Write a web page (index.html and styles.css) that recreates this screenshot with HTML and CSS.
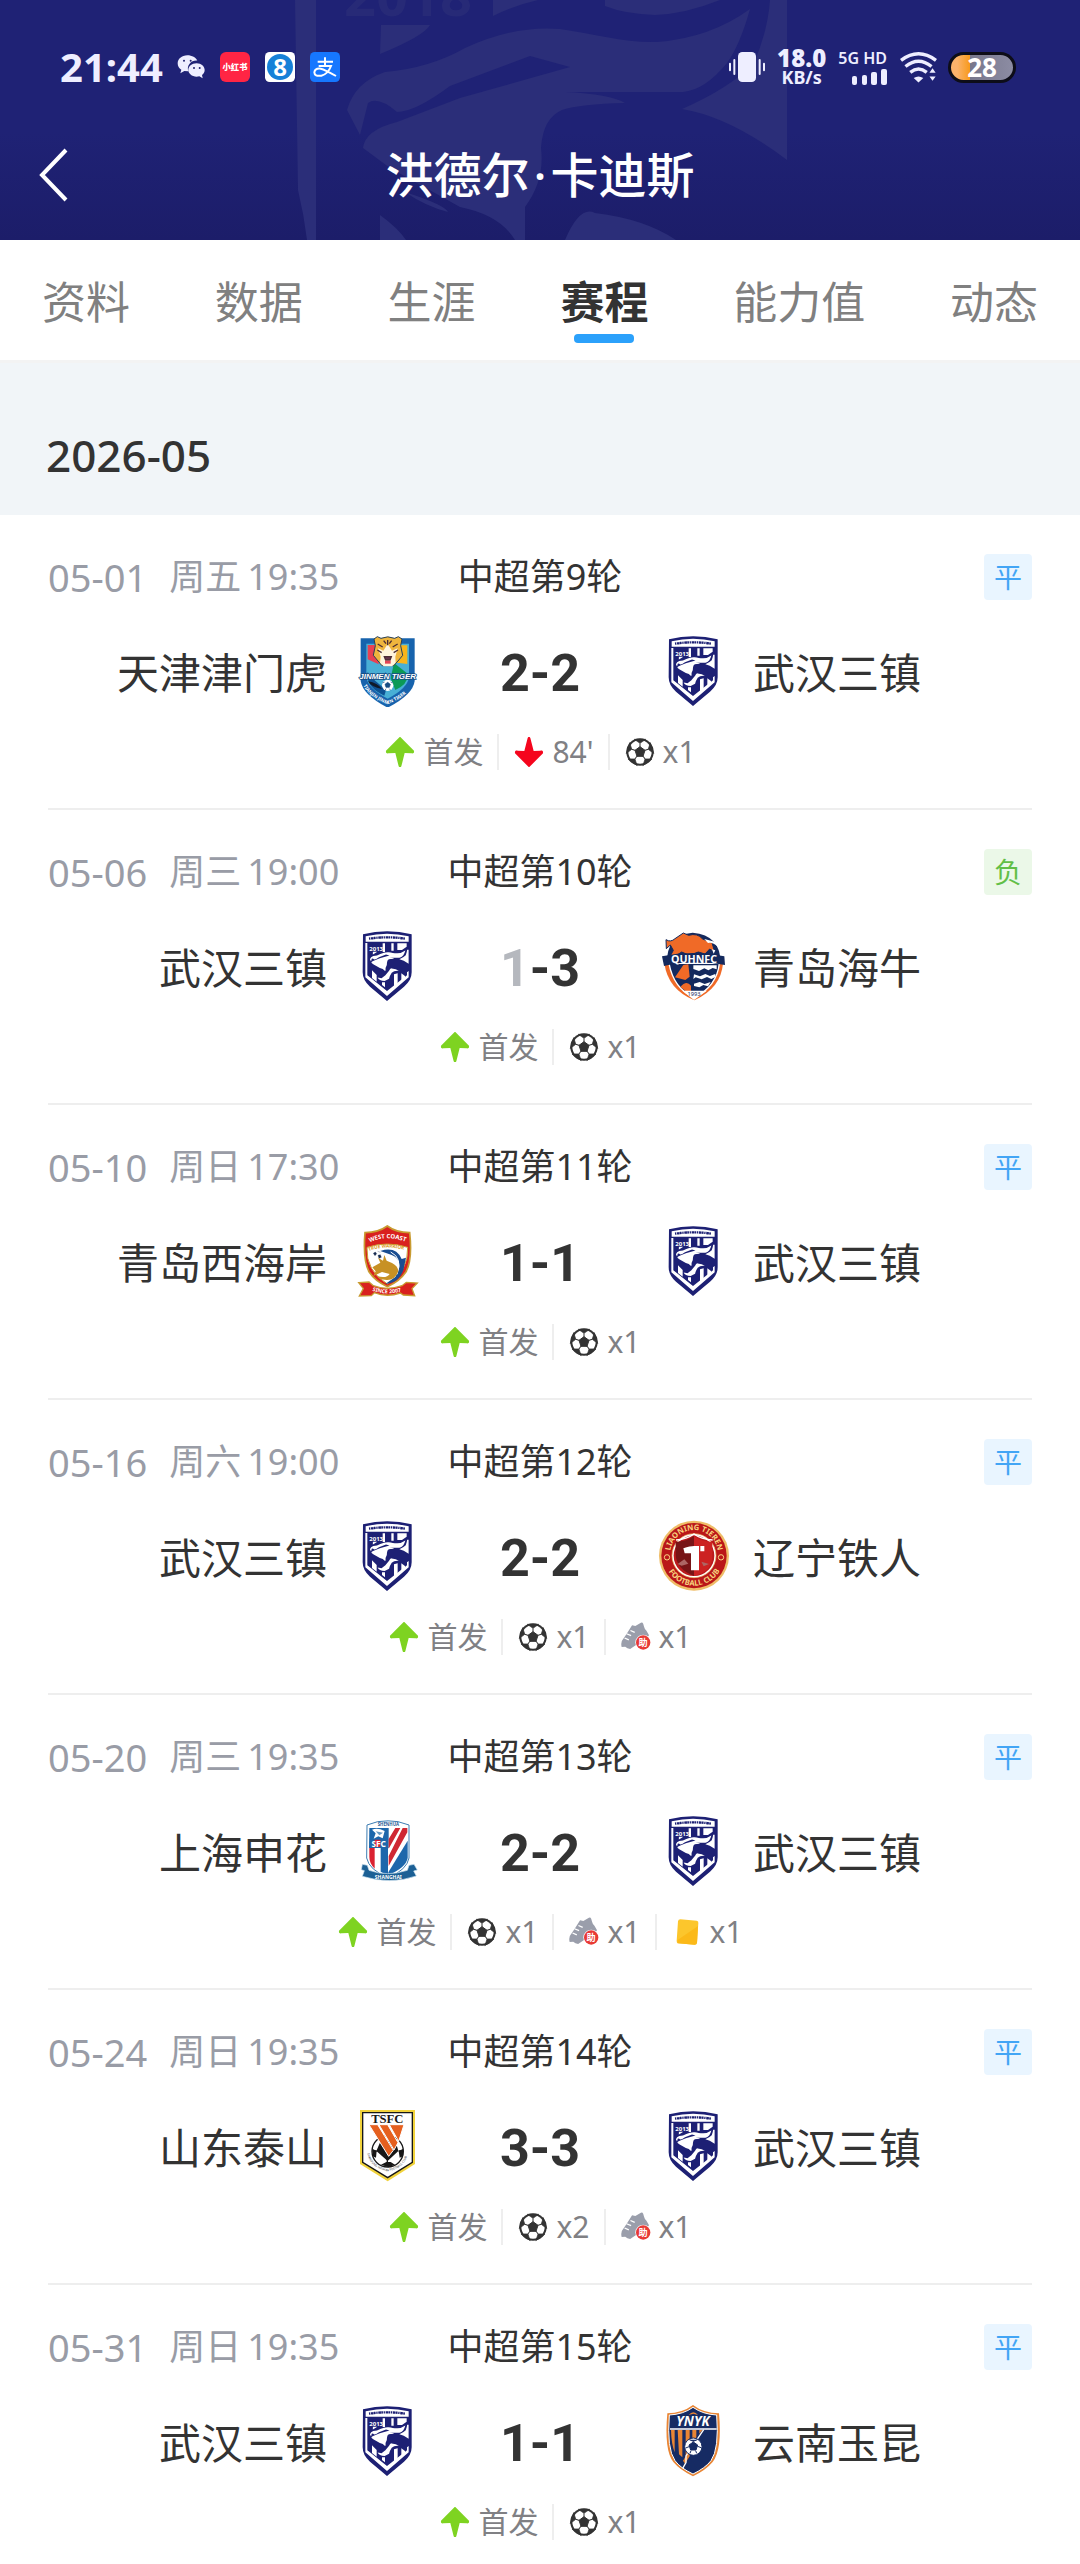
FILE: index.html
```html
<!DOCTYPE html>
<html lang="zh-CN">
<head>
<meta charset="utf-8">
<meta name="viewport" content="width=device-width, initial-scale=1">
<title>洪德尔·卡迪斯 - 赛程</title>
<link rel="stylesheet" href="styles.css">
</head>
<body>
<svg class="sprite" aria-hidden="true">
  <symbol id="up" viewBox="134 346 90 90"><path d="M179 345l42 42c1 7-2 9-8 8l-20-1-10 40q-4 8-8 0l-10-40-20 1c-6 1-9-1-8-8z" fill="#7ed321"/></symbol>
  <symbol id="down" viewBox="134 346 90 90"><path d="M179 437l42-42c1-7-2-9-8-8l-20 1-10-39q-4-8-8 0l-10 39-20-1c-6-1-9 1-8 8z" fill="#f5051d"/></symbol>
  <symbol id="ball" viewBox="-45 -45 90 90">
    <circle r="41" fill="#333"/><circle r="35" fill="#fff"/>
    <path d="M0-16L15-5 9 13H-9L-15-5z" fill="#333" stroke="#333" stroke-width="3" stroke-linejoin="round"/>
    <g id="patch"><path d="M-17-38L0-26 17-38z" fill="#333" stroke="#333" stroke-width="2"/><path d="M0-26V-14" stroke="#333" stroke-width="3"/></g>
    <use href="#patch" transform="rotate(72)"/><use href="#patch" transform="rotate(144)"/><use href="#patch" transform="rotate(216)"/><use href="#patch" transform="rotate(288)"/>
  </symbol>
  <symbol id="boot" viewBox="693 375 92 90">
    <path d="M727 384l10 2 17-10q5-2 7 3l3 10q2 8 7 12l8 14-10 12-31 18-17 12q-9-1-15-7l-11 1q-4-17 5-26l10-14z" fill="#9a9eab"/>
    <path d="M710 410l14 6M704 423l13 6M722 400l13 6" stroke="#fff" stroke-width="4"/>
    <circle cx="761" cy="437" r="24" fill="#fff"/><circle cx="761" cy="437" r="22" fill="#e83a35"/>
    <text x="761" y="447" font-size="28" font-weight="700" text-anchor="middle" fill="#fff">助</text>
  </symbol>
  <symbol id="card" viewBox="995 377 90 90"><path d="M1020 384l49 4q6 1 5 7l-4 59q-1 6-7 6l-49-4q-6-1-5-7l4-59q1-6 7-6z" fill="#fcc62c"/><path d="M1073 404l-61 42-1 10 52 4q6 0 7-6z" fill="#fbb919"/></symbol>

  <symbol id="wuhan" viewBox="949 45 216 216">
    <path d="M985 58Q1057 40 1131 58V172Q1131 196 1108 215L1057 258 1006 215Q984 196 984 172z" fill="#1d2074"/>
    <path d="M993 64Q1057 49 1122 64V80H993z" fill="#fff"/>
    <path d="M1003 71q54-8 109 0" fill="none" stroke="#1d2074" stroke-width="7" stroke-dasharray="4 2 8 1 5 2"/>
    <path d="M992 84H998V181L1057 228 1117 181V172L1122 168V187L1057 243 992 187z" fill="#fff"/>
    <path d="M1044 85h7v26h-7zM1070 85h7v22h-7zM1088 85h28v10l-14 10h-14z" fill="#fff"/>
    <text x="1004" y="107" font-size="18" font-weight="700" fill="#fff">2013</text>
    <g transform="translate(988 104) scale(.264)" fill="#fff">
      <path d="M101 25H150Q144 36 100 54z"/>
      <path id="jaguar" d="M67 110Q75 82 105 72 150 68 185 48 235 25 280 29C315 34 345 43 377 42Q430 38 470 9 460 45 447 63 425 90 403 92H285Q330 94 345 103 300 104 282 110 263 118 261 148 265 180 245 207V240H235Q220 215 180 207L110 168 83 148Q85 130 117 122L180 98 290 67 250 56 170 86Q135 112 117 112 98 96 88 103L80 135z"/>
      <path d="M402 109Q450 88 474 63 488 30 490 0H507V160Q450 117 402 109zM285 240Q300 205 315 213 365 219 396 240 340 236 315 262 290 300 285 330l-50 26q-64-2-80-40l44 8 44-34z"/>
    </g>
    <path d="M1012 166l14 14v20l-14-11zM1042 202h9v15l-9-7zM1078 178l11-3v34l-11 9zM1100 175l11 8v10l-11 9z" fill="#fff"/>
  </symbol>

  <symbol id="tianjin" viewBox="30 42 216 216">
    <path d="M59 52H221V180Q216 221 140 260 65 221 59 180z" fill="#1763ad"/>
    <path d="M76 68H204V168Q200 202 140 233 80 202 76 168z" fill="#48afd5"/>
    <path d="M80 72h28l5 58-33-15z" fill="#e84152"/><path d="M170 73h29v56l-31-4z" fill="#f8b51b"/><path d="M159 126l43 34q-3 32-39 47l-14-35z" fill="#0b9a56"/><path d="M80 160l55 47-5 17q-48-22-50-55z" fill="#0e5293"/>
    <path d="M81 181q29 5 42 23-33-6-42-23z" fill="#101a28"/>
    <path d="M99 54l10-7 11 5q20-9 41 0l11-5 11 7-4 20 6 29-14 17-13 14h-35l-12-14-14-17 6-29z" fill="#efb53d" stroke="#26405a" stroke-width="3"/>
    <path d="M111 82l16 7 13-20 13 20 17-7-7 25 1 18-11 11h-25l-11-11 2-18z" fill="#fff4dc"/>
    <path d="M110 69l15 9M170 69l-15 9M140 57v16M128 59l7 9M152 59l-7 9M109 87l13 8M171 87l-13 8M130 107h21l-4 10h-13z" fill="#65334b" stroke="#4b2d34" stroke-width="4"/>
    <path d="M132 119h17v9h-17z" fill="#e34555"/>
    <text x="140" y="174" text-anchor="middle" class="narrow" fill="#fff" stroke="#174d83" stroke-width="5" paint-order="stroke">JINMEN TIGER</text>
    <circle cx="140" cy="193" r="17" fill="#fff"/><path d="M140 184l8 6-3 9h-10l-3-9zM124 186l7-3M156 186l-7-3M132 208l3-5M149 208l-4-5" fill="#174d83" stroke="#174d83" stroke-width="2"/>
    <path id="tj-arc" d="M65 186Q76 224 140 250 204 224 216 186" fill="none"/><text font-size="14" font-weight="700" fill="#fff"><textPath href="#tj-arc" startOffset="8">TIANJIN JINMEN TIGER</textPath></text>
  </symbol>

  <symbol id="hainiu" viewBox="48 60 216 216">
    <path d="M78 160Q75 76 155 68 239 75 239 160z" fill="#14295d"/>
    <path d="M70 160H246Q240 235 160 271 81 239 70 160z" fill="#f06a27"/>
    <path d="M84 160H235Q228 228 160 263 98 236 84 160z" fill="#14295d" stroke="#fff" stroke-width="4"/>
    <path d="M75 89q14 9 27-3l25-17 16 7q26-8 42 11l28 11 8 28-15-9-14 15-20-6-27 10-23-10-23 15-10-5 8-15-9-16-12 11z" fill="#f06a27" stroke="#14295d" stroke-width="3"/>
    <path d="M190 87l31 8q13 5 10 16-16-15-30-12zM213 118l10 3-5 10z" fill="#fff"/>
    <path d="M102 202l25-37 15-2 4 37-13 10zM118 231q18-22 32-4v17l-12 3z" fill="#f06a27"/>
    <path d="M157 166h70v12l-12-4-13 7-12-6-16 8-17-6zM159 193l18 6 16-7 14 6 16-6v9l-12 6-13-6-16 7-18-6-7 5zM159 221l17-5 15 6 18-6-8 13-14-4-12 7-16-4z" fill="#fff"/>
    <path d="M63 139Q155 119 250 139L252 165Q158 145 69 168z" fill="#14295d"/>
    <text x="159" y="160" text-anchor="middle" font-size="32" font-weight="700" fill="#fff">QUHNFC</text>
    <path d="M124 242h74l-39 28z" fill="#fff"/><text x="159" y="257" text-anchor="middle" font-size="17" fill="#14295d">1993</text>
  </symbol>

  <symbol id="westcoast" viewBox="30 45 216 216">
    <path d="M139 48q25 19 67 20 9 84-12 119-18 27-55 43-36-16-54-43-20-35-13-119 41-1 67-20z" fill="#d9211e" stroke="#c89b31" stroke-width="5"/>
    <path d="M78 112q61-20 122 0 3 72-61 110-65-40-61-110z" fill="#fff" stroke="#c89b31" stroke-width="3"/>
    <path id="wc-a" d="M86 97q53-24 112 0" fill="none"/><text font-size="18" font-weight="700" fill="#fff"><textPath href="#wc-a">WEST COAST</textPath></text>
    <path id="wc-b" d="M84 123q54-21 118 0" fill="none"/><text font-size="14" font-weight="700" fill="#d99a24"><textPath href="#wc-b">TRUE WARRIOR</textPath></text>
    <circle cx="108" cy="135" r="15" fill="#fff"/><path d="M97 130l6-4 4 5-5 6zM111 136l7-2 3 8-7 3zM110 124l8 3" fill="#172b50" stroke="#172b50"/>
    <path d="M118 123q47-15 64 24l13-4-8 38q-15 39-54 41l30-21q29-49-11-66z" fill="#194d91"/>
    <path d="M149 126q37 18 19 67" fill="none" stroke="#fff" stroke-width="3"/>
    <path d="M94 172l24-14-7-15 15 9 4-17 7 17 16 7q18 9 19 25-10 27-35 26-26-1-28-11 29 7 37-7l-23-6-26 12 7-14z" fill="#c79124"/>
    <path d="M53 218l31-2 13 11q41 16 86 0l13-10 33 2-16 17 8 21-34-2-9-6q-40 14-78-1l-9 9-36 1 12-22z" fill="#d9211e" stroke="#c89b31" stroke-width="4"/>
    <path id="wc-c" d="M94 242q46 16 94 0" fill="none"/><text font-size="16" font-weight="700" fill="#fff"><textPath href="#wc-c">SINCE 2007</textPath></text>
  </symbol>

  <symbol id="liaoning" viewBox="48 60 216 216">
    <circle cx="159" cy="167" r="105" fill="#efbd68"/><circle cx="159" cy="167" r="98" fill="#ba1719"/><circle cx="159" cy="167" r="66" fill="#fff" stroke="#efbd68" stroke-width="2"/><circle cx="159" cy="167" r="61" fill="#b91a1c"/>
    <path d="M104 126q34-2 55-18v120q-53-20-55-65z" fill="#781416"/><path d="M159 108q20 16 55 18v45q-2 45-55 57z" fill="#cc2222"/>
    <path d="M105 120q33-2 54-18 21 16 56 18" fill="none" stroke="#fff" stroke-width="4"/>
    <path d="M127 145q21-7 32-7h15v73h-24v-51h-19zM178 138h12v16h-12z" fill="#fff"/><path d="M110 192l20-14 12 13-20 6zM181 185l23 7-16 7z" fill="#ad6664"/>
    <path id="ln-t" d="M87 162a72 72 0 0 1 144 0" fill="none"/><text font-size="23" font-weight="700" fill="#f7d37f"><textPath href="#ln-t" startOffset="10">LIAONING TIEREN</textPath></text>
    <path id="ln-b" d="M69 167a90 90 0 0 0 180 0" fill="none"/><text font-size="23" font-weight="700" fill="#f7d37f"><textPath href="#ln-b" startOffset="50">FOOTBALL CLUB</textPath></text>
    <circle cx="78" cy="172" r="8" fill="none" stroke="#f7d37f" stroke-width="3"/><circle cx="240" cy="172" r="8" fill="none" stroke="#f7d37f" stroke-width="3"/>
  </symbol>

  <symbol id="shenhua" viewBox="30 75 216 216">
    <path d="M78 105l32-10q32-5 61 0l33 10v99q-6 35-62 59-58-23-65-59z" fill="#fff" stroke="#3c7db3" stroke-width="3"/>
    <path d="M85 114h58v60H84z" fill="#1d67ab"/><path d="M85 174h16v62q-16-16-16-35zM101 149h17v22h-17z" fill="#da2131"/><path d="M119 174h22v83l-22-12z" fill="#1d67ab"/>
    <path d="M163 114h15l-35 62v-29zM185 114h14v13l-56 101v-30z" fill="#cf2833"/><path d="M200 152v52q-5 29-58 51v-8z" fill="#1d67ab"/>
    <path d="M93 119q17-7 38 4l-6 22-13-6-14 7 6-16z" fill="#fff"/><path d="M104 124l22 4-11 8z" fill="#679bc5"/>
    <text x="113" y="171" text-anchor="middle" font-size="25" font-weight="700" fill="#fff">SFC</text><text x="142" y="108" text-anchor="middle" font-size="13" font-weight="700" fill="#1d5a92">SHENHUA</text>
    <path d="M64 223l15 3 5 15q55 20 115 0l5-15 15-3 10 17-11 3 8 15q-78 27-162 1l6-17-9-3z" fill="#1c6095" stroke="#cde4f2" stroke-width="2"/>
    <text x="142" y="266" text-anchor="middle" font-size="15" font-weight="700" fill="#fff">SHANGHAI</text>
  </symbol>

  <symbol id="taishan" viewBox="30 60 216 216">
    <path d="M57 60H222V222L140 274 57 222z" fill="#f1d33c"/><path d="M65 68H214V217L140 263 65 217z" fill="#fff" stroke="#171717" stroke-width="4"/>
    <circle cx="140" cy="184" r="47" fill="#fff" stroke="#171717" stroke-width="4"/>
    <path d="M120 151h43l9 32-32 30-34-30zM94 176l13 7-2 20-10-4zM187 176l-14 7 3 20 10-4zM120 224l16-8h13l13 8-19 8z" fill="#171717"/><path d="M107 183h-12M173 183h12M139 205v17" stroke="#171717" stroke-width="4"/>
    <path d="M84 104h26l47 77-14 18zM114 104h26l31 54-12 22zM145 104h44l-16 50z" fill="#e5601f" stroke="#fff" stroke-width="3"/>
    <text x="139" y="98" text-anchor="middle" font-size="38" font-weight="700" class="serif" fill="#171717">TSFC</text>
    <path id="ts-a" d="M79 190q8 43 61 54 52-10 61-54" fill="none"/><text font-size="9" fill="#333"><textPath href="#ts-a">SHANDONG TAISHAN FOOTBALL CLUB</textPath></text>
  </symbol>

  <symbol id="yunnan" viewBox="48 75 216 216">
    <path d="M156 75q31 24 78 25 10 110-19 146-20 24-59 43-40-20-59-43-28-35-18-146 45-1 77-25z" fill="#e98534"/><path d="M156 82q30 21 71 23 8 102-17 137-17 22-54 40-38-18-54-40-25-35-17-137 42-2 71-23z" fill="#162b63" stroke="#fff" stroke-width="3"/>
    <path d="M90 150h11v67q-10-25-11-67zM110 150h14v82l-10-9zM134 150h12v79l-14 22-6-9 8-13zM154 150h12v22l-12 16zM175 150h9l-9 11z" fill="#e98534"/>
    <path d="M87 147h140" stroke="#fff" stroke-width="4"/><path d="M188 149l-53 79v20l-10 17" fill="none" stroke="#fff" stroke-width="4"/>
    <path d="M143 105q14-16 28 0l-14-4z" fill="#e98534"/><text x="156" y="139" text-anchor="middle" font-size="40" font-weight="700" font-style="italic" fill="#fff">YNYK</text>
    <circle cx="157" cy="200" r="26" fill="#fff" stroke="#162b63" stroke-width="3"/><path d="M157 186l13 9-5 15h-16l-5-15zM145 179l12 5 12-5M134 204l10-4M180 203l-10-4M147 220l3-8M167 220l-3-8" fill="#162b63" stroke="#162b63" stroke-width="3"/>
  </symbol>
</svg>

<header class="header">
  <svg class="watermark" viewBox="0 0 520 240" aria-hidden="true">
    <g fill="#2b2e79">
      <path d="M15 0H36V240H27Q24 215 18 190z"/>
      <text x="64" y="16" font-size="56" font-weight="700" opacity=".7">2018</text>
      <path d="M101 25H150Q144 36 100 54zM213 0H258Q232 6 213 16zM325 0H440Q405 14 375 15 345 14 325 6z"/>
      <use href="#jaguar"/>
      <path d="M402 109Q450 88 474 63 488 30 490 0H507V160Q450 117 402 109zM125 192Q165 205 168 212 145 206 125 192zM100 215Q118 228 126 240H100zM285 240Q300 205 315 213 365 219 396 240z"/>
    </g>
  </svg>
  <div class="status">
    <span class="clock">21:44</span>
    <svg class="app" viewBox="0 0 90 90" role="img" aria-label="微信"><path d="M37 10c-17 0-29 11-29 24 0 8 4 15 11 19l-3 11 12-7 12 1c-6-19 10-34 27-32C63 17 51 10 37 10zm28 24C50 34 40 44 40 54s10 20 25 20l8-1 10 6-2-10c5-4 8-9 8-15 0-10-10-20-24-20z" fill="#eef"/><g fill="#20226f"><circle cx="27" cy="26" r="3"/><circle cx="47" cy="26" r="3"/><circle cx="57" cy="48" r="3"/><circle cx="74" cy="48" r="3"/></g></svg>
    <svg class="app" viewBox="0 0 90 90" role="img" aria-label="小红书"><rect width="90" height="90" rx="18" fill="#ff2544"/><text x="45" y="54" text-anchor="middle" font-size="25" font-weight="900" fill="#fff">小红书</text></svg>
    <svg class="app" viewBox="0 0 90 90"><rect width="90" height="90" rx="14" fill="#fff"/><circle cx="45" cy="45" r="39" fill="#1681d8"/><text x="45" y="71" text-anchor="middle" font-size="72" font-weight="700" fill="#fff">8</text></svg>
    <svg class="app" viewBox="0 0 90 90" role="img" aria-label="支付宝"><rect width="90" height="90" rx="14" fill="#1677ff"/><path d="M23 29h46M45 16v26M26 42h37Q54 66 34 71 13 74 13 61q2-13 19-11 13 3 46 22" fill="none" stroke="#fff" stroke-width="6"/></svg>
    <span class="spacer"></span>
    <svg class="vibrate" viewBox="0 0 108 90"><rect x="27" width="54" height="90" rx="13" fill="#eef"/><path d="M3 35v20M16 24v42M92 24v42M105 35v20" stroke="#eef" stroke-width="6" stroke-linecap="round"/></svg>
    <span class="speed"><b>18.0</b><small>KB/s</small></span>
    <span class="signal"><small>5G HD</small><svg viewBox="0 0 36 16"><g fill="#eef"><rect x="1" y="7" width="5" height="9" rx="2"/><rect x="11" y="6" width="5" height="10" rx="2"/><rect x="20" y="3" width="6" height="13" rx="2"/><rect x="30" width="6" height="16" rx="2"/></g></svg></span>
    <svg class="wifi" viewBox="0 0 108 90"><path d="M3 24Q54-14 105 24M16 42Q54 12 92 42M30 59Q54 40 78 59" fill="none" stroke="#eef" stroke-width="10"/><path d="M40 76q14-9 28 0L54 89zM86 60l9-13 9 13zM86 71l9 13 9-13z" fill="#eef"/></svg>
    <span class="battery">28</span>
  </div>
  <div class="titlebar">
    <button class="back" type="button" aria-label="返回"><svg viewBox="0 0 30 54"><path d="M27 2L3 27 27 52" fill="none" stroke="#fff" stroke-width="4"/></svg></button>
    <h1>洪德尔<span class="dot">·</span>卡迪斯</h1>
  </div>
</header>

<nav class="tabs">
  <a href="#info">资料</a><a href="#stats">数据</a><a href="#career">生涯</a><a href="#schedule" class="active" aria-current="page">赛程</a><a href="#ability">能力值</a><a href="#feed">动态</a>
</nav>

<main id="schedule">
  <h2 class="month">2026-05</h2>
  <ul class="matches">
    <li class="match">
      <div class="meta"><p class="date"><span>05-01</span><span>周五</span><span>19:35</span></p><h3>中超第9轮</h3><span class="tag">平</span></div>
      <div class="teams"><div class="team home">天津津门虎<svg><use href="#tianjin"/></svg></div><p class="score"><span>2</span>-<span>2</span></p><div class="team"><svg><use href="#wuhan"/></svg>武汉三镇</div></div>
      <ul class="events"><li><svg><use href="#up"/></svg>首发</li><li><svg><use href="#down"/></svg>84'</li><li><svg><use href="#ball"/></svg>x1</li></ul>
    </li>
    <li class="match">
      <div class="meta"><p class="date"><span>05-06</span><span>周三</span><span>19:00</span></p><h3>中超第10轮</h3><span class="tag loss">负</span></div>
      <div class="teams"><div class="team home">武汉三镇<svg><use href="#wuhan"/></svg></div><p class="score"><span class="lost">1</span>-<span>3</span></p><div class="team"><svg><use href="#hainiu"/></svg>青岛海牛</div></div>
      <ul class="events"><li><svg><use href="#up"/></svg>首发</li><li><svg><use href="#ball"/></svg>x1</li></ul>
    </li>
    <li class="match">
      <div class="meta"><p class="date"><span>05-10</span><span>周日</span><span>17:30</span></p><h3>中超第11轮</h3><span class="tag">平</span></div>
      <div class="teams"><div class="team home">青岛西海岸<svg><use href="#westcoast"/></svg></div><p class="score"><span>1</span>-<span>1</span></p><div class="team"><svg><use href="#wuhan"/></svg>武汉三镇</div></div>
      <ul class="events"><li><svg><use href="#up"/></svg>首发</li><li><svg><use href="#ball"/></svg>x1</li></ul>
    </li>
    <li class="match">
      <div class="meta"><p class="date"><span>05-16</span><span>周六</span><span>19:00</span></p><h3>中超第12轮</h3><span class="tag">平</span></div>
      <div class="teams"><div class="team home">武汉三镇<svg><use href="#wuhan"/></svg></div><p class="score"><span>2</span>-<span>2</span></p><div class="team"><svg><use href="#liaoning"/></svg>辽宁铁人</div></div>
      <ul class="events"><li><svg><use href="#up"/></svg>首发</li><li><svg><use href="#ball"/></svg>x1</li><li><svg><use href="#boot"/></svg>x1</li></ul>
    </li>
    <li class="match">
      <div class="meta"><p class="date"><span>05-20</span><span>周三</span><span>19:35</span></p><h3>中超第13轮</h3><span class="tag">平</span></div>
      <div class="teams"><div class="team home">上海申花<svg><use href="#shenhua"/></svg></div><p class="score"><span>2</span>-<span>2</span></p><div class="team"><svg><use href="#wuhan"/></svg>武汉三镇</div></div>
      <ul class="events"><li><svg><use href="#up"/></svg>首发</li><li><svg><use href="#ball"/></svg>x1</li><li><svg><use href="#boot"/></svg>x1</li><li><svg><use href="#card"/></svg>x1</li></ul>
    </li>
    <li class="match">
      <div class="meta"><p class="date"><span>05-24</span><span>周日</span><span>19:35</span></p><h3>中超第14轮</h3><span class="tag">平</span></div>
      <div class="teams"><div class="team home">山东泰山<svg><use href="#taishan"/></svg></div><p class="score"><span>3</span>-<span>3</span></p><div class="team"><svg><use href="#wuhan"/></svg>武汉三镇</div></div>
      <ul class="events"><li><svg><use href="#up"/></svg>首发</li><li><svg><use href="#ball"/></svg>x2</li><li><svg><use href="#boot"/></svg>x1</li></ul>
    </li>
    <li class="match">
      <div class="meta"><p class="date"><span>05-31</span><span>周日</span><span>19:35</span></p><h3>中超第15轮</h3><span class="tag">平</span></div>
      <div class="teams"><div class="team home">武汉三镇<svg><use href="#wuhan"/></svg></div><p class="score"><span>1</span>-<span>1</span></p><div class="team"><svg><use href="#yunnan"/></svg>云南玉昆</div></div>
      <ul class="events"><li><svg><use href="#up"/></svg>首发</li><li><svg><use href="#ball"/></svg>x1</li></ul>
    </li>
  </ul>
</main>
</body>
</html>
```
FILE: styles.css
```css
* { box-sizing: border-box; margin: 0; padding: 0; }

body {
  background: #fff;
  color: #333;
  font-family: "Noto Sans", "Noto Sans CJK SC", sans-serif;
}

ul { list-style: none; }
svg { display: block; flex: none; }
.sprite { position: absolute; width: 0; height: 0; }
.narrow { font: italic 700 24px "Liberation Sans Narrow", "Liberation Sans", sans-serif; }
.serif { font-family: "Liberation Serif", serif; }

/* Header */
.header {
  position: relative;
  overflow: hidden;
  background: linear-gradient(#1f2275 55%, #1c1d69);
  color: #fff;
}
.watermark {
  position: absolute;
  top: 0;
  left: 50%;
  width: 520px;
  height: 240px;
  margin-left: -260px;
}
.status {
  position: relative;
  display: flex;
  align-items: center;
  height: 110px;
  padding: 24px 64px 0 60px;
  color: #eef;
  font-weight: 700;
}
.clock { font-size: 40px; line-height: 48px; margin-right: 12px; }
.app { width: 30px; height: 30px; margin-right: 15px; }
.spacer { flex: 1; }
.vibrate { width: 36px; height: 30px; margin-right: 12px; }
.speed, .signal { display: flex; flex-direction: column; align-items: center; }
.speed { margin-right: 12px; }
.speed b { font-size: 24px; line-height: 20px; }
.speed small { font-size: 18px; line-height: 18px; }
.signal { align-items: flex-end; gap: 3px; margin-right: 13px; }
.signal small { font-size: 16px; line-height: 16px; font-weight: 600; }
.signal svg { width: 36px; height: 16px; }
.wifi { width: 37px; height: 31px; margin-right: 11px; }
.battery {
  width: 68px;
  height: 31px;
  border: 3px solid #0d0d18;
  border-radius: 16px;
  background: linear-gradient(90deg, #fbb26b 10%, #f79a1d 30%, #77778c 30%, #8c8ca3);
  color: #fff;
  font-size: 26px;
  line-height: 25px;
  text-align: center;
}
.titlebar {
  position: relative;
  display: grid;
  grid-template-columns: 80px 1fr 80px;
  align-items: center;
  height: 130px;
}
.back { padding-left: 39px; border: 0; background: none; }
.back svg { width: 30px; height: 54px; }
.titlebar h1 { font-size: 48px; line-height: 60px; font-weight: 500; text-align: center; }
.dot { padding: 0 4px; }

/* Tabs */
.tabs {
  display: flex;
  justify-content: space-between;
  height: 120px;
  padding: 30px 42px 0;
}
.tabs a {
  display: flex;
  flex-direction: column;
  align-items: center;
  color: #808080;
  font-size: 44px;
  line-height: 64px;
  text-decoration: none;
}
.tabs .active { color: #333; font-weight: 700; }
.tabs .active::after {
  content: "";
  width: 60px;
  height: 9px;
  border-radius: 4px;
  background: #2ba1fb;
}

/* Schedule */
.month {
  height: 155px;
  padding: 64px 46px 0;
  border-top: 3px solid #f3f3f3;
  background: #f1f5f8;
  font-size: 44px;
  line-height: 56px;
  font-weight: 500;
}
.match {
  margin: 0 48px;
  padding: 39px 0 38px;
  border-bottom: 2px solid #eee;
}
.match:last-child { padding-bottom: 24px; border-bottom: 0; }
.meta {
  display: grid;
  grid-template-columns: 1fr auto 1fr;
  align-items: center;
  font-size: 36px;
  line-height: 46px;
}
.meta h3 { font-size: 36px; font-weight: 400; }
.date { display: flex; gap: 6px; color: #999ca6; }
.date span:first-child { margin-right: 16px; font-size: 38px; }
.tag {
  justify-self: end;
  width: 48px;
  height: 46px;
  border-radius: 4px;
  background: #e9f5ff;
  color: #42a5f5;
  font-size: 28px;
  text-align: center;
}
.tag.loss { background: #ebf8e8; color: #62bf47; }
.teams {
  display: grid;
  grid-template-columns: 1fr 234px 1fr;
  margin-top: 35px;
}
.team {
  display: flex;
  height: 72px;
  gap: 24px;
  font-size: 42px;
  line-height: 76px;
}
.team.home { justify-content: flex-end; }
.team svg { width: 72px; height: 72px; }
.score {
  height: 72px;
  font-family: Roboto, sans-serif;
  font-size: 52px;
  line-height: 78px;
  font-weight: 700;
  text-align: center;
}
.lost { color: #b5b8be; }
.events {
  display: flex;
  justify-content: center;
  margin-top: 27px;
  color: #808084;
  font-size: 30px;
  line-height: 36px;
}
.events li { display: flex; align-items: center; gap: 8px; padding: 0 14px 0 15px; }
.events li + li { border-left: 2px solid #eee; }
.events svg { width: 30px; height: 30px; }
```
